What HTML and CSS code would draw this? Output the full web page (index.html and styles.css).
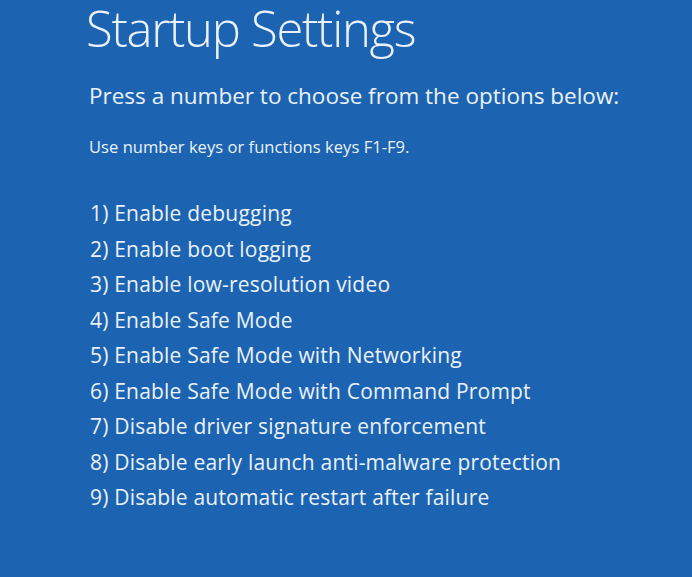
FILE: index.html
```html
<!DOCTYPE html>
<html>
<head>
<meta charset="utf-8">
<link rel="stylesheet" href="styles.css">
</head>
<body>
<main class="screen">
  <h1 class="title">Startup Settings</h1>
  <p class="lead">Press a number to choose from the options below:</p>
  <p class="hint">Use number keys or functions keys F1-F9.</p>
  <ol class="options">
    <li>1) Enable debugging</li>
    <li>2) Enable boot logging</li>
    <li>3) Enable low-resolution video</li>
    <li>4) Enable Safe Mode</li>
    <li>5) Enable Safe Mode with Networking</li>
    <li>6) Enable Safe Mode with Command Prompt</li>
    <li>7) Disable driver signature enforcement</li>
    <li>8) Disable early launch anti-malware protection</li>
    <li>9) Disable automatic restart after failure</li>
  </ol>
</main>
</body>
</html>
```

FILE: styles.css
```css
html, body {
  margin: 0;
  padding: 0;
  height: 100%;
}
body {
  background: #1c64b1;
  color: #ebf1fa;
  font-family: "Open Sans", "Noto Sans", sans-serif;
}
.screen {
  padding: 0 0 0 86px;
  height: 577px;
  box-sizing: border-box;
  overflow: hidden;
}
.title {
  margin: 0;
  font-size: 49px;
  font-weight: 300;
  line-height: 56px;
  letter-spacing: -1.3px;
}
.lead {
  margin: 25px 0 0 3px;
  font-size: 22.5px;
  font-weight: 400;
  line-height: 30px;
}
.hint {
  margin: 25px 0 0 3px;
  font-size: 16.5px;
  line-height: 22px;
  letter-spacing: 0.05px;
}
.options {
  list-style: none;
  margin: 38px 0 0 4px;
  padding: 0;
}
.options li {
  font-size: 21px;
  line-height: 35.5px;
  letter-spacing: 0.2px;
}
```
